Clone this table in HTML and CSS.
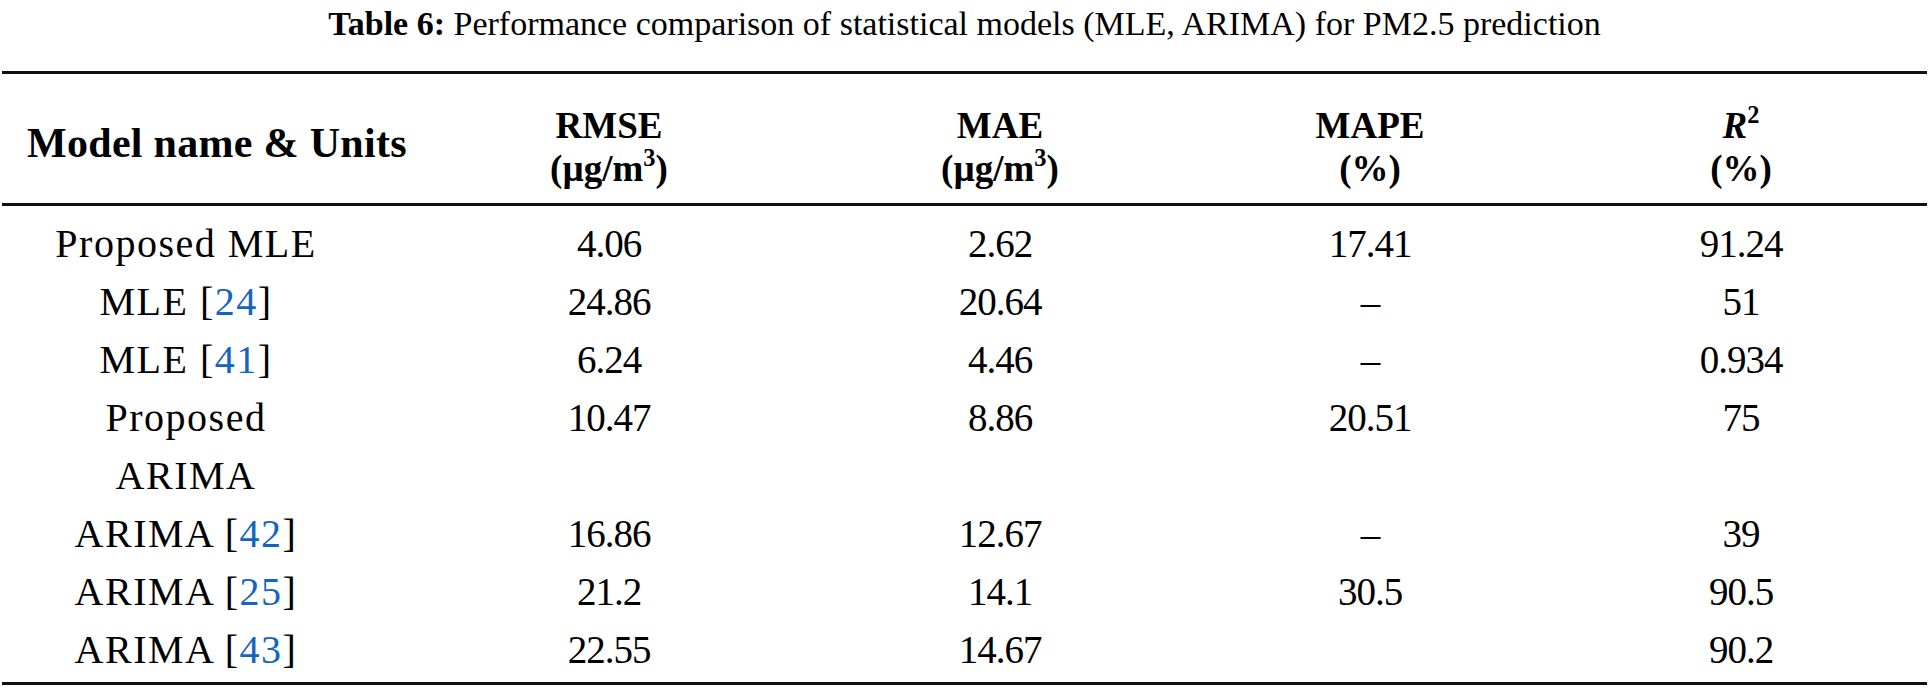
FILE: index.html
```html
<!DOCTYPE html>
<html lang="en">
<head>
<meta charset="utf-8">
<title>Table 6</title>
<link rel="stylesheet" href="styles.css">
</head>
<body>
<div class="page">
  <p class="caption"><b>Table 6:</b> Performance comparison of statistical models (MLE, ARIMA) for PM2.5 prediction</p>
  <table class="data">
    <colgroup>
      <col class="c-name">
      <col class="c-first">
      <col class="c-num">
      <col class="c-num">
      <col class="c-last">
    </colgroup>
    <thead>
      <tr>
        <th class="name">Model name &amp; Units</th>
        <th>RMSE<br>(µg/m<sup>3</sup>)</th>
        <th>MAE<br>(µg/m<sup>3</sup>)</th>
        <th>MAPE<br>(%)</th>
        <th><i>R</i><sup>2</sup><br>(%)</th>
      </tr>
    </thead>
    <tbody>
      <tr>
        <td class="name">Proposed MLE</td>
        <td>4.06</td>
        <td>2.62</td>
        <td>17.41</td>
        <td>91.24</td>
      </tr>
      <tr>
        <td class="name">MLE [<a class="ref">24</a>]</td>
        <td>24.86</td>
        <td>20.64</td>
        <td>–</td>
        <td>51</td>
      </tr>
      <tr>
        <td class="name">MLE [<a class="ref">41</a>]</td>
        <td>6.24</td>
        <td>4.46</td>
        <td>–</td>
        <td>0.934</td>
      </tr>
      <tr>
        <td class="name">Proposed<br>ARIMA</td>
        <td>10.47</td>
        <td>8.86</td>
        <td>20.51</td>
        <td>75</td>
      </tr>
      <tr>
        <td class="name">ARIMA [<a class="ref">42</a>]</td>
        <td>16.86</td>
        <td>12.67</td>
        <td>–</td>
        <td>39</td>
      </tr>
      <tr>
        <td class="name">ARIMA [<a class="ref">25</a>]</td>
        <td>21.2</td>
        <td>14.1</td>
        <td>30.5</td>
        <td>90.5</td>
      </tr>
      <tr>
        <td class="name">ARIMA [<a class="ref">43</a>]</td>
        <td>22.55</td>
        <td>14.67</td>
        <td></td>
        <td>90.2</td>
      </tr>
    </tbody>
  </table>
</div>
</body>
</html>
```
FILE: styles.css
```css
html, body {
  margin: 0;
  padding: 0;
  background: #ffffff;
}

body {
  font-family: "Liberation Serif", "Times New Roman", serif;
  color: #000000;
}

.page {
  padding: 0 3px 0 2px;
}

.caption {
  margin: 0 0 23px 0;
  font-size: 34px;
  line-height: 48px;
  text-align: center;
}

.caption b {
  font-weight: bold;
}

.data {
  width: 1925px;
  table-layout: fixed;
  border-collapse: separate;
  border-spacing: 0;
}

.c-name { width: 401px; }
.c-first { width: 412px; }
.c-num { width: 370px; }
.c-last { width: 372px; }

.data th {
  font-size: 37px;
  font-weight: bold;
  line-height: 43px;
  text-align: center;
  vertical-align: middle;
  padding: 30px 0 13px 0;
  border-top: 3px solid #111111;
  border-bottom: 3px solid #111111;
  white-space: nowrap;
}

.data th.name {
  font-size: 42px;
  text-align: left;
  padding: 22px 0 13px 25px;
  letter-spacing: 0.3px;
}

.data td {
  font-size: 39px;
  line-height: 58px;
  text-align: center;
  vertical-align: top;
  padding: 0;
  letter-spacing: -1px;
  white-space: nowrap;
}

.data td.name {
  font-size: 40px;
  letter-spacing: 1.5px;
  padding-right: 33px;
}

.data tbody tr:first-child td {
  padding-top: 9px;
}

.data tbody tr:last-child td {
  padding-bottom: 3px;
  border-bottom: 3px solid #111111;
}

.data sup {
  font-size: 0.66em;
  line-height: 0;
  vertical-align: 0.6em;
}

.data i {
  font-style: italic;
}

.ref {
  color: #1565c0;
  text-decoration: none;
}
```
